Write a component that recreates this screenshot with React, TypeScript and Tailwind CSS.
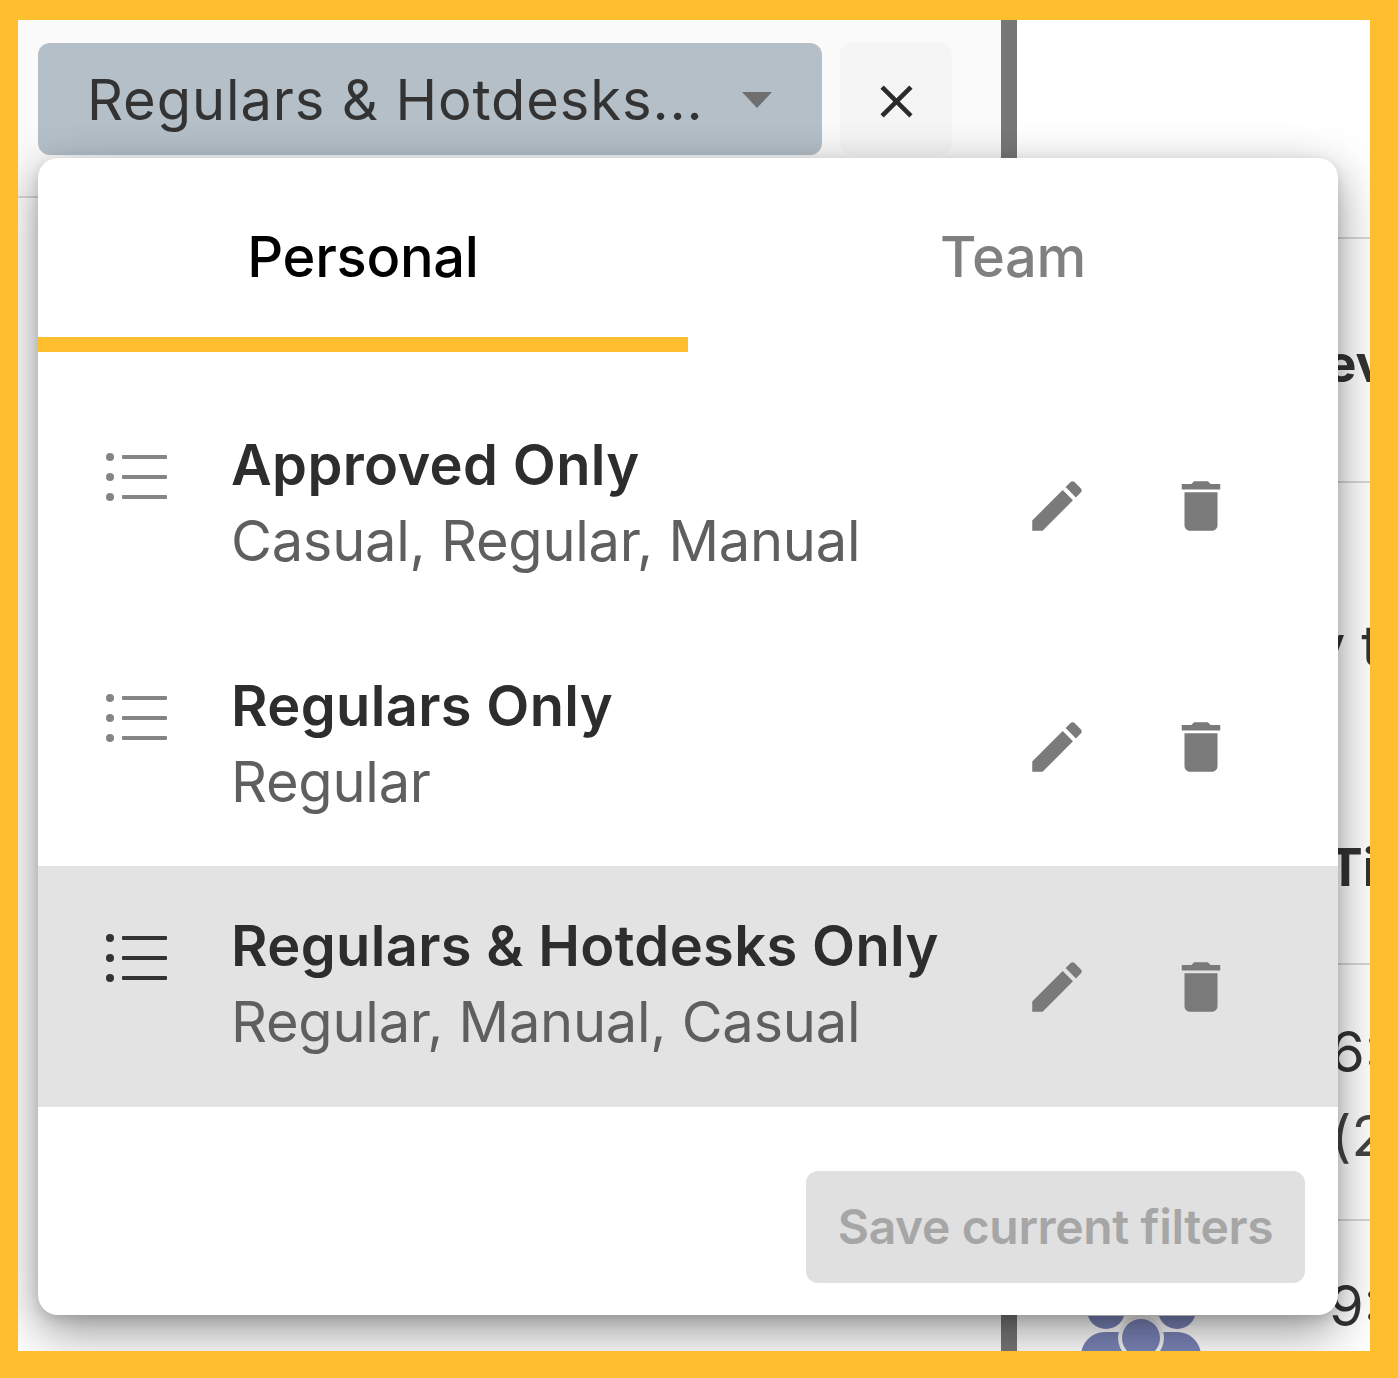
import React from "react";

const savedViews = [
  { name: "Approved Only", detail: "Casual, Regular, Manual" },
  { name: "Regulars Only", detail: "Regular" },
  { name: "Regulars & Hotdesks Only", detail: "Regular, Manual, Casual", selected: true },
];

function ListIcon({ selected }: { selected?: boolean }) {
  return (
    <svg width="62" height="50" viewBox="0 0 62 50" className={selected ? "text-[#333333]" : "text-[#858585]"}>
      {[5, 25, 45].map((y) => (
        <g key={y} fill="currentColor">
          <circle cx="5" cy={y} r="4" />
          <rect x="17" y={y - 2} width="45" height="4" rx="1" />
        </g>
      ))}
    </svg>
  );
}

function EditIcon() {
  return (
    <svg width="66" height="66" viewBox="0 0 24 24" fill="#7a7a7a">
      <path d="M3 17.25V21h3.75L17.81 9.94l-3.75-3.75L3 17.25zM20.71 7.04c.39-.39.39-1.02 0-1.41l-2.34-2.34c-.39-.39-1.02-.39-1.41 0l-1.83 1.83 3.75 3.75 1.83-1.83z" />
    </svg>
  );
}

function DeleteIcon() {
  return (
    <svg width="66" height="66" viewBox="0 0 24 24" fill="#7a7a7a">
      <path d="M6 19c0 1.1.9 2 2 2h8c1.1 0 2-.9 2-2V7H6v12zM19 4h-3.5l-1-1h-5l-1 1H5v2h14V4z" />
    </svg>
  );
}

function PeopleIcon() {
  return (
    <svg width="120" height="60" viewBox="0 0 120 60" fill="#7b84b8" className="shrink-0">
      <circle cx="25" cy="-6" r="19" />
      <circle cx="96" cy="-6" r="19" />
      <rect x="0" y="16" width="120" height="60" rx="24" />
      <circle cx="60" cy="22" r="23" fill="#f2f2f2" />
      <circle cx="60" cy="22" r="19" />
    </svg>
  );
}

export default function App() {
  return (
    <div className="h-[1378px] w-[1398px] bg-[#fdbf2d] pt-[20px] pl-[18px] pr-[28px] pb-[27px] font-['Inter',sans-serif] text-[#333333]">
      <div className="relative flex h-full w-full overflow-hidden bg-white">
        {/* page behind the menu */}
        <div className="w-[983px] shrink-0">
          <div className="flex h-[178px] gap-[18px] border-b-2 border-[#d8d8d8] bg-[#fafafa] pt-[23px] pl-[20px]">
            <div className="flex h-[112px] w-[784px] items-center justify-between rounded-[12px] bg-[#b4bfc8] pt-[2px] pl-[49px] pr-[50px]">
              <span className="text-[56px] leading-none tracking-[0.9px] whitespace-nowrap">Regulars &amp; Hotdesks...</span>
              <svg width="30" height="16" viewBox="0 0 30 16" fill="#6f6f6f">
                <path d="M0 0h30L15 16z" />
              </svg>
            </div>
            <div className="flex h-[112px] w-[112px] items-center justify-center rounded-[12px] bg-[#f5f5f5] pt-[4px]">
              <svg width="55" height="55" viewBox="0 0 24 24" fill="#2b2b2b">
                <path d="M19 6.41 17.59 5 12 10.59 6.41 5 5 6.41 10.59 12 5 17.59 6.41 19 12 13.41 17.59 19 19 17.59 13.41 12z" />
              </svg>
            </div>
          </div>
        </div>
        <div className="w-[16px] shrink-0 bg-[#777777]" />
        <div className="flex min-w-0 flex-1 flex-col overflow-hidden text-[52px] leading-none whitespace-nowrap">
          <div className="h-[219px] shrink-0 border-b-2 border-[#d8d8d8]" />
          <div className="flex h-[244px] shrink-0 items-center border-b-2 border-[#d8d8d8] pt-[8px] pl-[275px] font-bold">Review</div>
          <div className="flex h-[482px] shrink-0 flex-col border-b-2 border-[#d8d8d8] pl-[321px]">
            <span className="mt-[135px] -ml-[95px] text-[56px]">Day to</span>
            <span className="mt-[168px] -ml-[10px] font-bold">Time</span>
          </div>
          <div className="flex h-[256px] shrink-0 flex-col border-b-2 border-[#d8d8d8] pl-[313px] text-[56px]">
            <span className="mt-[59px]">6:00</span>
            <span className="mt-[28px] pl-[1px] text-[#444444]">(2h)</span>
          </div>
          <div className="flex h-[131px] shrink-0 items-start pl-[64px]">
            <div className="mt-[95px]">
              <PeopleIcon />
            </div>
            <span className="mt-[57px] ml-[128px] text-[56px]">9:00</span>
          </div>
        </div>

        {/* saved filters menu */}
        <div className="absolute left-[20px] top-[138px] flex h-[1157px] w-[1300px] flex-col rounded-[20px] bg-white shadow-[0_16px_48px_rgba(0,0,0,0.42),0_4px_12px_rgba(0,0,0,0.12)]">
          <div className="flex h-[194px] shrink-0">
            <div className="flex w-[650px] flex-col">
              <div className="flex flex-1 items-center justify-center pt-[18px] text-[56px] leading-none font-medium tracking-[-0.3px] text-black">Personal</div>
              <div className="h-[15px] bg-[#fdbf2d]" />
            </div>
            <div className="flex w-[650px] items-center justify-center pt-[3px] text-[56px] leading-none font-medium tracking-[-0.3px] text-[#808080]">Team</div>
          </div>
          <div className="flex flex-col pt-[33px]">
            {savedViews.map((view) => (
              <div
                key={view.name}
                className={`flex h-[240.5px] items-center pl-[67px] ${view.selected ? "bg-[#e3e3e3]" : ""}`}
              >
                <div className="-mt-[56px] w-[126px] shrink-0">
                  <ListIcon selected={view.selected} />
                </div>
                <div className="-mt-[4px] w-[793px] shrink-0">
                  <div className="text-[56px] leading-[76px] font-semibold tracking-[0.35px] text-[#2d2d2d] whitespace-nowrap">{view.name}</div>
                  <div className="text-[56px] leading-[76px] tracking-[-0.25px] text-[#5f5f5f] whitespace-nowrap">{view.detail}</div>
                </div>
                <div className="mt-[2px] flex gap-[78px]">
                  <EditIcon />
                  <DeleteIcon />
                </div>
              </div>
            ))}
          </div>
          <div className="flex flex-1 items-start justify-end pt-[64px] pr-[33px]">
            <div className="flex h-[112px] w-[499px] items-center justify-center rounded-[12px] bg-[#e0e0e0] text-[48px] font-semibold tracking-[-0.35px] text-[#a6a6a6] whitespace-nowrap">
              Save current filters
            </div>
          </div>
        </div>
      </div>
    </div>
  );
}
